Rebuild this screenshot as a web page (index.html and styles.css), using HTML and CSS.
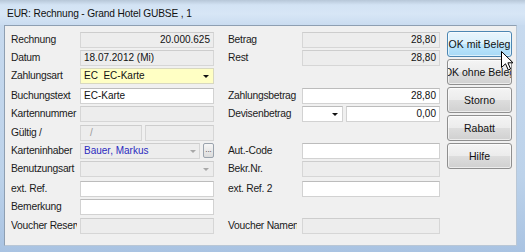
FILE: index.html
```html
<!DOCTYPE html>
<html>
<head>
<meta charset="utf-8">
<link rel="stylesheet" href="styles.css">
</head>
<body>
<div class="window">
  <div class="titlebar"><span class="title">EUR: Rechnung - Grand Hotel GUBSE , 1</span></div>
  <div class="frame">
    <div class="client">
      <div class="form">
        <div class="l1">Rechnung</div>
        <div class="f1 tb dis num">20.000.625</div>
        <div class="l2">Betrag</div>
        <div class="f2 tb dis num">28,80</div>

        <div class="l1">Datum</div>
        <div class="f1 tb dis">18.07.2012 (Mi)</div>
        <div class="l2">Rest</div>
        <div class="f2 tb dis num">28,80</div>

        <div class="l1">Zahlungsart</div>
        <div class="f1 tb combo yellow">EC&nbsp; EC-Karte<span class="arrow"></span></div>

        <div class="l1">Buchungstext</div>
        <div class="f1 tb">EC-Karte</div>
        <div class="l2">Zahlungsbetrag</div>
        <div class="f2 tb num">28,80</div>

        <div class="l1">Kartennummer</div>
        <div class="f1 tb dis"></div>
        <div class="l2">Devisenbetrag</div>
        <div class="f2 split">
          <div class="tb combo small"><span class="arrow"></span></div>
          <div class="tb num grow">0,00</div>
        </div>

        <div class="l1">Gültig /</div>
        <div class="f1 split gap3">
          <div class="tb dis half slash">/</div>
          <div class="tb dis grow"></div>
        </div>

        <div class="l1">Karteninhaber</div>
        <div class="f1 split gap3">
          <div class="tb dis combo grow owner">Bauer, Markus<span class="arrow light"></span></div>
          <div class="dots">...</div>
        </div>
        <div class="l2">Aut.-Code</div>
        <div class="f2 tb"></div>

        <div class="l1">Benutzungsart</div>
        <div class="f1 tb dis combo"><span class="arrow light"></span></div>
        <div class="l2">Bekr.Nr.</div>
        <div class="f2 tb dis"></div>

        <div class="l1">ext. Ref.</div>
        <div class="f1 tb"></div>
        <div class="l2">ext. Ref. 2</div>
        <div class="f2 tb"></div>

        <div class="l1">Bemerkung</div>
        <div class="f1 tb"></div>

        <div class="l1">Voucher Reservierung</div>
        <div class="f1 tb dis"></div>
        <div class="l2">Voucher Namensliste</div>
        <div class="f2 tb dis"></div>

        <div class="buttons">
          <div class="btn hover">OK mit Beleg</div>
          <div class="btn">OK ohne Beleg</div>
          <div class="btn">Storno</div>
          <div class="btn">Rabatt</div>
          <div class="btn">Hilfe</div>
        </div>
      </div>
    </div>
  </div>
  <svg class="cursor" width="13" height="20" viewBox="0 0 13 20">
    <path d="M0.5 0.5 L0.5 16.5 L4.5 12.8 L7.3 19 L9.6 18 L6.9 11.8 L12 11.8 Z" fill="#fff" stroke="#000" stroke-width="1" stroke-linejoin="miter"/>
  </svg>
</div>
</body>
</html>
```

FILE: styles.css
```css
* { box-sizing: border-box; }
html, body { margin: 0; padding: 0; }
body {
  width: 525px;
  height: 252px;
  overflow: hidden;
  font-family: "Liberation Sans", Arial, sans-serif;
  font-size: 10px;
  color: #111;
}
.window {
  position: relative;
  width: 525px;
  height: 252px;
  display: flex;
  flex-direction: column;
  background: linear-gradient(to bottom, #c9dbef 0%, #bcd2ea 70%, #a9c3e2 100%);
}
.titlebar {
  height: 25px;
  flex: none;
  padding-left: 7px;
  display: flex;
  align-items: center;
  background: linear-gradient(to bottom, #b7c7d8 0px, #d3e3f4 5px, #d7e6f6 14px, #cadcf0 25px);
}
.title {
  font-size: 10.2px;
  letter-spacing: -0.15px;
  color: #111;
  padding-top: 1px;
}
.frame {
  flex: 1;
  display: flex;
  padding: 0 8px 6px 4px;
}
.client {
  flex: 1;
  background: #f0f0f0;
  border: 1px solid #8e9fb2;
  border-color: #8e9fb2 #b9c7d6 #b9c7d6 #8e9fb2;
  padding: 6px 0 0 6px;
}
.form {
  display: grid;
  grid-template-columns: 69px 134px 88px 138px 72px;
  grid-template-rows: 18px 18px 20px 18px 19px 18px 18px 20px 18px 19px 17px;
}
.l1, .l2 {
  font-size: 10.3px;
  letter-spacing: -0.25px;
  line-height: 16px;
  height: 16px;
  white-space: nowrap;
  overflow: hidden;
  align-self: start;
  color: #1a1a1a;
}
.l1 { grid-column: 1; margin-right: 3px; }
.l2 { grid-column: 3; padding-left: 14px; margin-right: 5px; }
.f1 { grid-column: 2; align-self: start; }
.f2 { grid-column: 4; align-self: start; }
.tb {
  height: 16px;
  border: 1px solid #d2d2d2;
  border-top-color: #bcbcbc;
  background: #fff;
  line-height: 14px;
  padding: 0 3px;
  white-space: nowrap;
  overflow: hidden;
  position: relative;
}
.tb.dis {
  background: #ededed;
  border-color: #d6d6d6;
  border-top-color: #cdcdcd;
}
.num { text-align: right; }
.yellow { background: #ffffc4; border-color: #d8d8c0; }
.combo { padding-right: 14px; }
.arrow {
  position: absolute;
  right: 4px;
  top: 6px;
  width: 0;
  height: 0;
  border-left: 3px solid transparent;
  border-right: 3px solid transparent;
  border-top: 3px solid #111;
}
.arrow.light { border-top-color: #a8a8a8; }
.split { display: flex; height: 16px; }
.split > .tb { flex: none; }
.split > .grow { flex: 1; }
.gap3 { gap: 3px; }
.split .small { width: 41px; margin-right: 3px; }
.half { width: 62px; }
.slash { color: #9a9a9a; padding-left: 9px; }
.owner { color: #2b2bbf; }
.owner .arrow { right: 3px; }
.dots {
  width: 11px;
  height: 15px;
  border: 1px solid #9aa3ad;
  border-radius: 2px;
  background: linear-gradient(to bottom, #f6f6f6, #dcdcdc);
  font-size: 8px;
  line-height: 11px;
  text-align: center;
  color: #333;
  overflow: hidden;
  flex: none;
}
.buttons {
  grid-column: 5;
  grid-row: 1 / span 9;
  padding-left: 7px;
  margin-top: -1px;
  display: flex;
  flex-direction: column;
  gap: 2px;
}
.btn {
  height: 26px;
  width: 65px;
  border: 1px solid #8f8f8f;
  border-radius: 3px;
  background: linear-gradient(to bottom, #f4f4f4 0%, #ececec 48%, #dddddd 52%, #d0d0d0 100%);
  box-shadow: inset 0 0 0 1px rgba(255,255,255,0.6);
  display: flex;
  align-items: center;
  justify-content: center;
  white-space: nowrap;
  overflow: hidden;
  color: #111;
  font-size: 10.5px;
}
.btn.hover {
  border-color: #4d87b3;
  background: linear-gradient(to bottom, #eaf6fd 0%, #d9f0fc 48%, #bee6fd 52%, #a7d9f5 100%);
}
.cursor {
  position: absolute;
  left: 501px;
  top: 51px;
}
```
